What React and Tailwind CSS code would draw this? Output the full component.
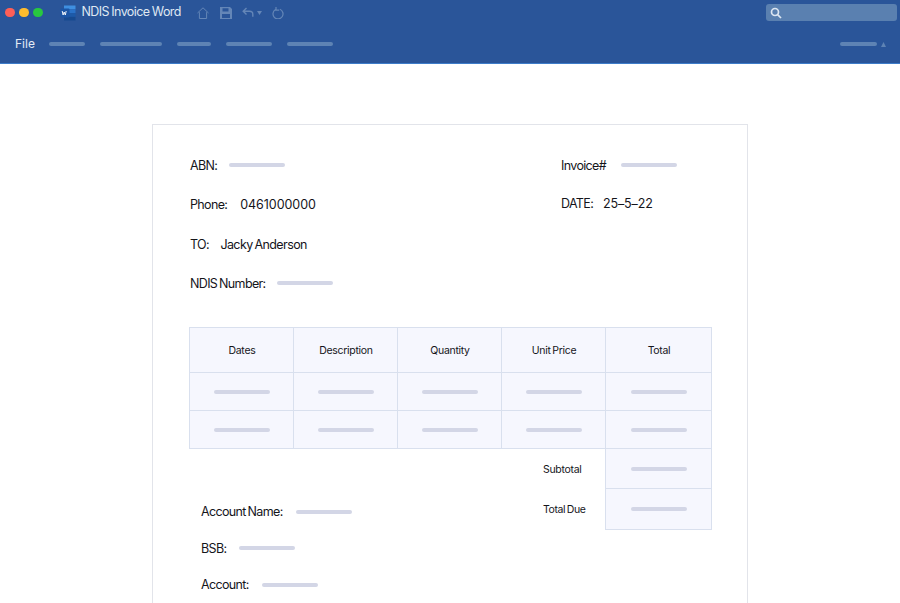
const Pill = ({ className = "" }) => <div className={`rounded-full ${className}`} />;
const Line = ({ className = "" }) => <div className={`h-1 w-[56px] rounded-full bg-[#d3d6e6] ${className}`} />;

const WordLogo = () => (
  <svg width="16" height="16" viewBox="0 0 16 16" className="block">
    <rect x="4" y="0.5" width="11.5" height="3.8" fill="#3f8fe0" />
    <rect x="4" y="4.3" width="11.5" height="3.8" fill="#2a72c8" />
    <rect x="4" y="8.1" width="11.5" height="3.8" fill="#1d5aa8" />
    <rect x="4" y="11.9" width="11.5" height="3.6" fill="#164a90" />
    <rect x="0.5" y="3.5" width="9" height="9" rx="1" fill="#1b55a5" />
    <path d="M2.2 6l.9 4 1.1-3 1.1 3 .9-4" fill="none" stroke="#fff" strokeWidth="0.9" />
  </svg>
);

const Toolbar = () => (
  <div className="ml-[16px] flex items-center text-[#6486b7]">
    <svg width="12" height="12" viewBox="0 0 12 12" fill="none" stroke="currentColor" strokeWidth="1">
      <path d="M0.5 6L6 0.8 11.5 6M2.4 5.2v6.3h7.2V5.2" />
    </svg>
    <svg className="ml-[11px]" width="12" height="12" viewBox="0 0 12 12" fill="currentColor">
      <path fillRule="evenodd" d="M0 0h10l2 2v10H0zM2.5 1.2v3.3h6V1.2zM2 7v4h8V7z" />
    </svg>
    <svg className="ml-[10px]" width="12" height="11" viewBox="0 0 12 11" fill="none" stroke="currentColor" strokeWidth="1.4">
      <path d="M4.5 1L1.2 4.2l3.3 3.2M1.2 4.2h6.3c2 0 3.3 1.2 3.3 3v2.6" />
    </svg>
    <svg className="ml-[3px]" width="5" height="4" viewBox="0 0 5 4" fill="currentColor"><path d="M0 0h5L2.5 4z" /></svg>
    <svg className="ml-[10px]" width="12" height="12" viewBox="0 0 12 12" fill="none" stroke="currentColor" strokeWidth="1.2">
      <path d="M3.5 2.6a5 5 0 1 0 4.4-.3M4 0v3.2h3.2" />
    </svg>
  </div>
);

const Field = ({ label, value, children, className = "" }) => (
  <div className={`flex h-5 items-center ${className}`}>
    <span className="tracking-[-0.65px] [word-spacing:-1px]">{label}</span>
    {value && <span className="ml-[11.5px] tracking-[-0.6px] [word-spacing:-1px]">{value}</span>}
    {children}
  </div>
);

const Digits = ({ label, value, className }) => (
  <div className="flex h-5 items-center">
    <span className="tracking-[-0.65px]">{label}</span>
    <span className={className}>{value}</span>
  </div>
);

const Cell = ({ children, className = "" }) => (
  <div className={`flex items-center justify-center border-[#d9e0ee] bg-[#f6f7fe] ${className}`}>{children}</div>
);

const heads = ["Dates", "Description", "Quantity", "Unit Price", "Total"];

export default function App() {
  return (
    <div className="h-[603px] overflow-hidden bg-white font-['Inter',sans-serif] text-[#15151b]">
      <header className="h-[64px] border-b border-[#3d7cc9] bg-[#2a5599]">
        <div className="flex h-[25px] items-center pl-[5px] pr-[3px]">
          <div className="flex gap-[4.5px]">
            <div className="h-[9.5px] w-[9.5px] rounded-full bg-[#ff5f57]" />
            <div className="h-[9.5px] w-[9.5px] rounded-full bg-[#febc2e]" />
            <div className="h-[9.5px] w-[9.5px] rounded-full bg-[#28c840]" />
          </div>
          <div className="ml-[17px]"><WordLogo /></div>
          <span className="ml-[6px] text-[12.5px] tracking-[-0.6px] [word-spacing:-0.5px] text-[#dfe7f2]">NDIS Invoice Word</span>
          <Toolbar />
          <div className="ml-auto flex h-[17px] w-[131px] items-center rounded-[3px] bg-[#5a80b0] pl-[4px]">
            <svg width="12" height="12" viewBox="0 0 12 12" fill="none" stroke="#dde6f2" strokeWidth="1.7">
              <circle cx="5" cy="5" r="3.5" />
              <path d="M7.6 7.6L11 11" />
            </svg>
          </div>
        </div>
        <div className="flex h-[38px] items-center pl-[15px] pr-[14px]">
          <span className="mr-[14px] text-[12px] text-[#e4ebf4]">File</span>
          <div className="flex gap-[15px]">
            <Pill className="h-1 w-[36px] bg-[#5e83b4]" />
            <Pill className="h-1 w-[62px] bg-[#5e83b4]" />
            <Pill className="h-1 w-[34px] bg-[#5e83b4]" />
            <Pill className="h-1 w-[46px] bg-[#5e83b4]" />
            <Pill className="h-1 w-[46px] bg-[#5e83b4]" />
          </div>
          <Pill className="ml-auto h-1 w-[37px] bg-[#5e83b4]" />
          <svg className="ml-[4px]" width="5" height="5" viewBox="0 0 5 5" fill="#5e83b4"><path d="M2.5 0L5 5H0z" /></svg>
        </div>
      </header>

      <main className="mx-auto mt-[60px] h-[600px] w-[596px] border border-[#e2e4ea] pl-[37px] pt-[31px] text-[12.5px]">
        <div className="flex">
          <div className="flex w-[371px] flex-col gap-[19.5px]">
            <Field label="ABN:"><Line className="mb-[3px] ml-3" /></Field>
            <Digits label="Phone:" value="0461000000" className="ml-[13px] tracking-[-0.05px]" />
            <Field label="TO:" value="Jacky Anderson" />
            <Field label="NDIS Number:"><Line className="mb-[3px] ml-[11px]" /></Field>
          </div>
          <div className="flex flex-col gap-[18px]">
            <Field label="Invoice#"><Line className="mb-[3px] ml-[15px]" /></Field>
            <Digits label="DATE:" value="25–5–22" className="ml-[10px] tracking-[-0.15px]" />
          </div>
        </div>

        <div className="-ml-px mt-[32px] w-[523px] text-[10.5px] tracking-[-0.3px] [word-spacing:-1px]">
          <div className="grid grid-cols-[104px_104px_104px_104px_106px] border-l border-t border-[#d9e0ee]">
            {heads.map((h) => (
              <Cell key={h} className="h-[45px] border-b border-r pl-px pt-[3px]">{h}</Cell>
            ))}
            {[0, 1].map((r) =>
              heads.map((h) => (
                <Cell key={h + r} className="h-[38px] border-b border-r pt-[2px]"><Line /></Cell>
              ))
            )}
          </div>
          <div className="flex">
            <div className="ml-[354px] flex w-[49px] flex-col items-start">
              <div className="flex h-[40px] items-center pt-[2px]">Subtotal</div>
              <div className="flex h-[41px] items-center pt-[2px] tracking-[-0.4px]">Total Due</div>
            </div>
            <div className="ml-[13px] w-[107px] border-l border-[#d9e0ee]">
              <Cell className="h-[40px] border-b border-r pt-[2px]"><Line /></Cell>
              <Cell className="h-[41px] border-b border-r"><Line /></Cell>
            </div>
          </div>
        </div>

        <div className="-mt-[27px] ml-[11px] flex flex-col gap-[16.5px]">
          <Field label="Account Name:"><Line className="mb-[2px] ml-[13px]" /></Field>
          <Field label="BSB:"><Line className="mb-[2px] ml-[13px]" /></Field>
          <Field label="Account:"><Line className="mb-[2px] ml-[13px]" /></Field>
        </div>
      </main>
    </div>
  );
}
